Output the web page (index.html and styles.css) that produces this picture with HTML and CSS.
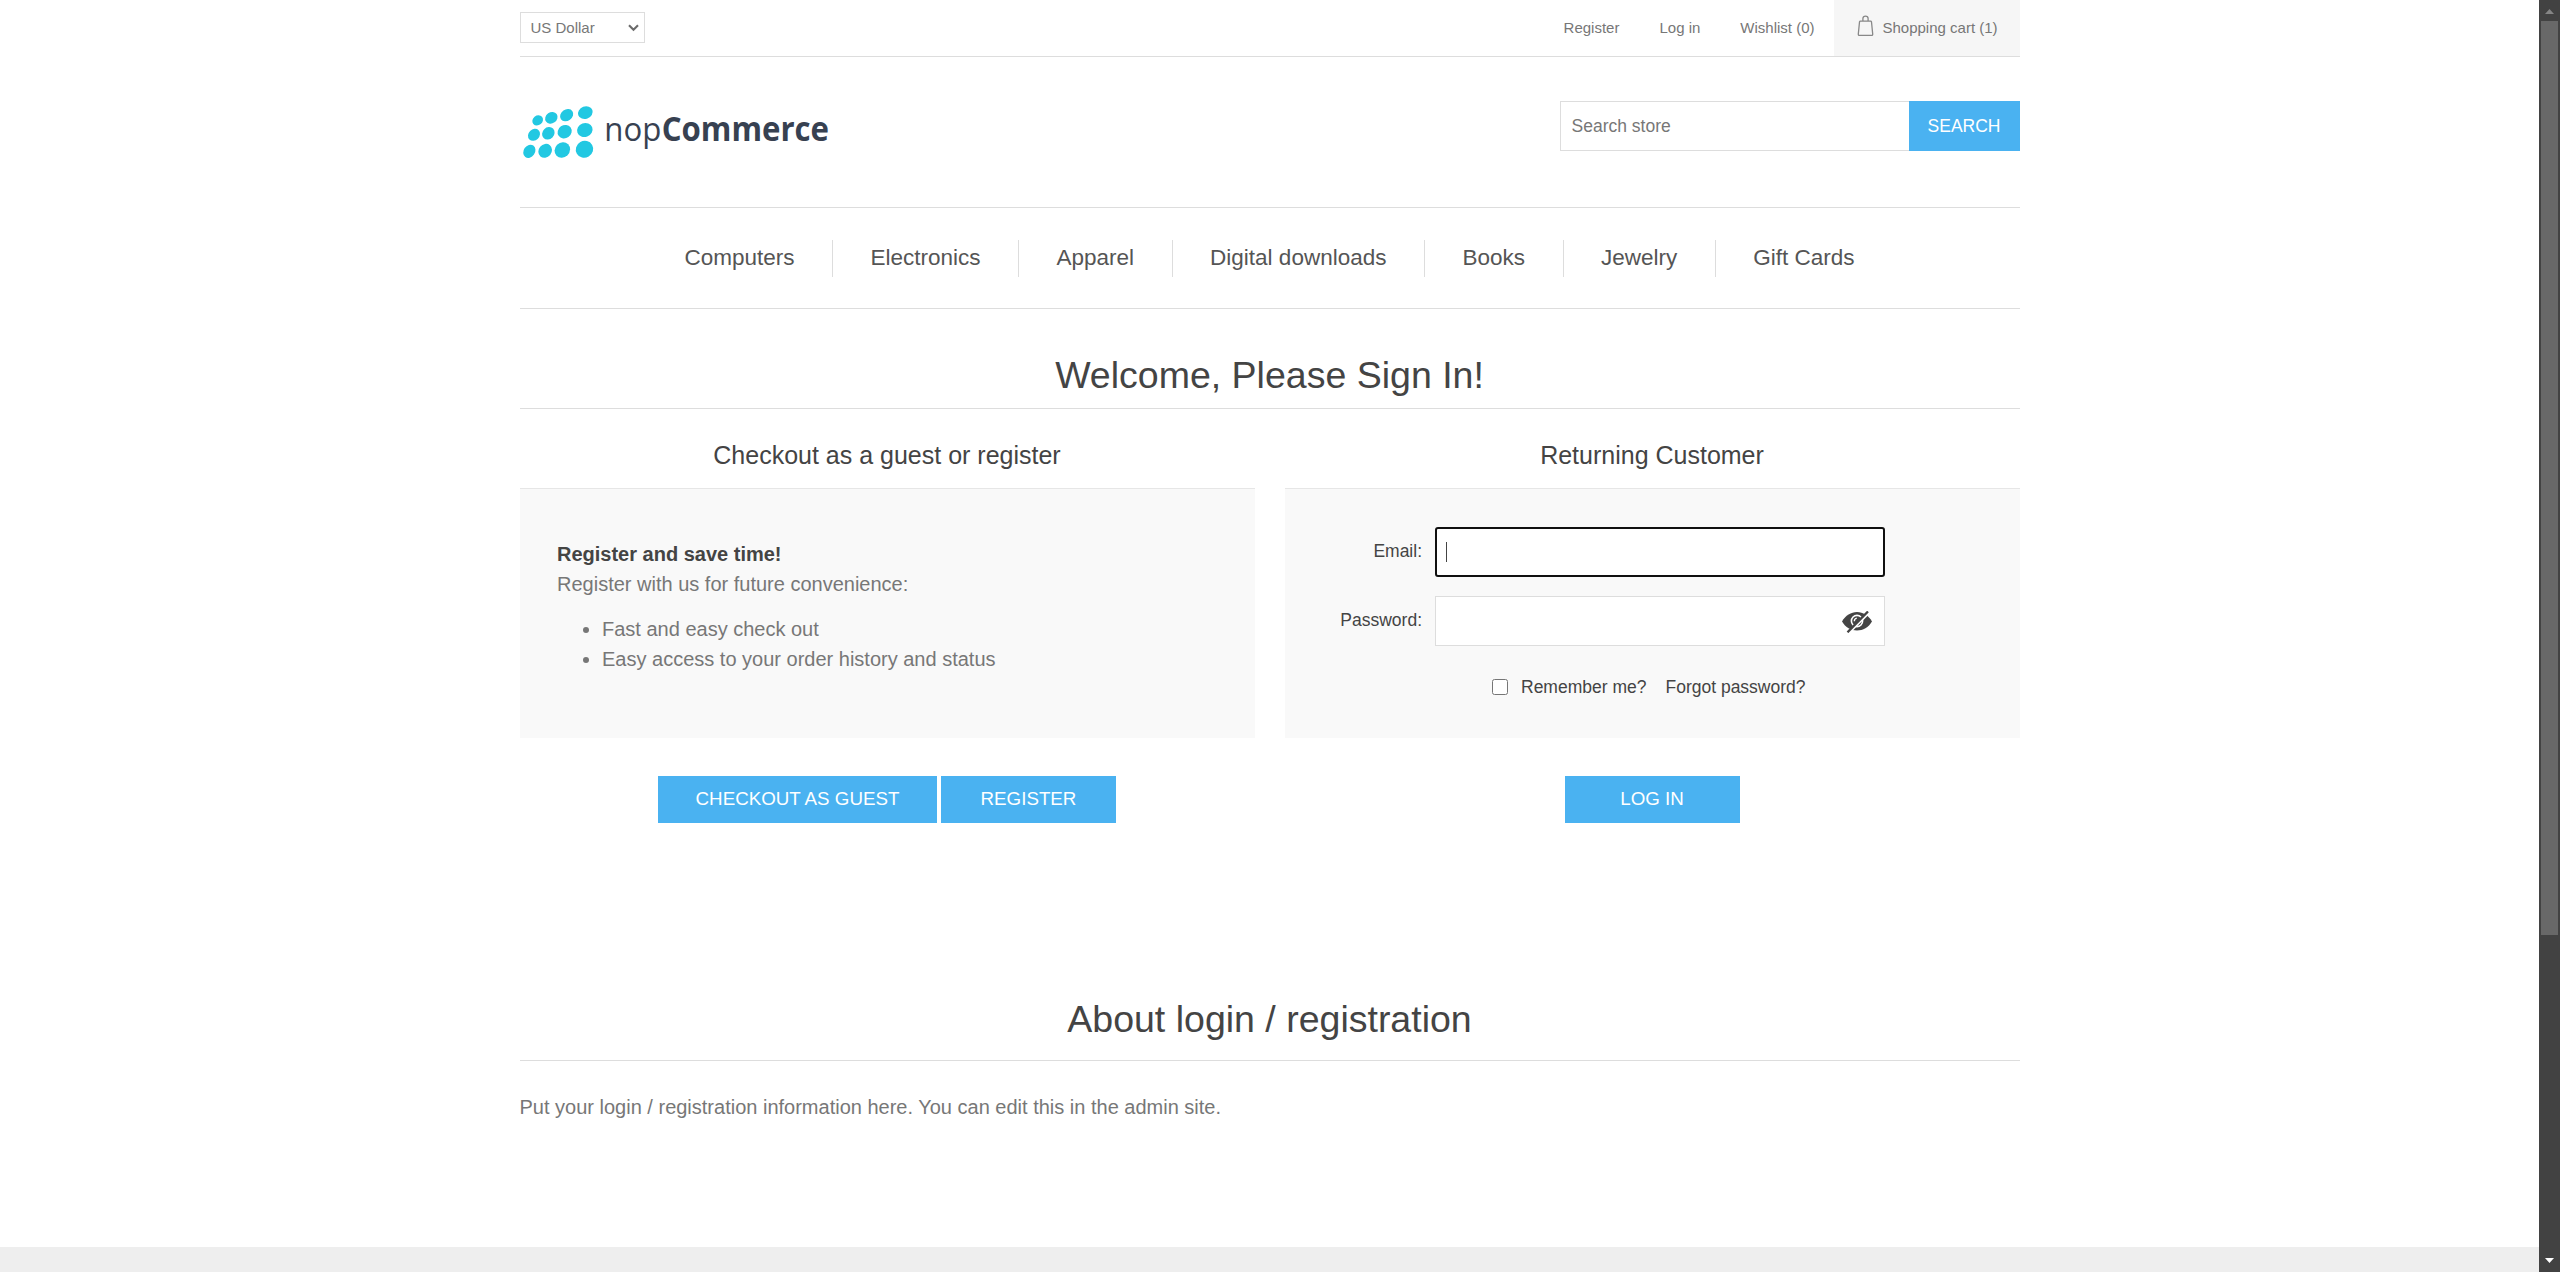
FILE: index.html
```html
<!DOCTYPE html>
<html lang="en">
<head>
<meta charset="utf-8">
<title>nopCommerce - Login</title>
<link rel="stylesheet" href="styles.css">
</head>
<body>
<div class="page">
  <div class="wrapper">
    <header>
      <div class="top-bar">
        <div class="currency">
          <select class="currency-select" aria-label="Currency"><option>US Dollar</option></select>
          <svg class="chevron" width="11" height="8" viewBox="0 0 11 8"><path d="M1 1.3 5.5 5.8 10 1.3" fill="none" stroke="#6b6b6b" stroke-width="2.1"/></svg>
        </div>
        <nav class="top-links">
          <a class="link-register">Register</a>
          <a class="link-login">Log in</a>
          <a class="link-wishlist">Wishlist (0)</a>
          <a class="cart">
            <svg class="bag" width="17" height="22" viewBox="0 0 17 22" fill="none" stroke="#888" stroke-width="1.3"><path d="M3.4 6.2h10.2c.5 0 .8.3.9.8l1.2 12c.1.9-.3 1.4-1.1 1.4H2.4c-.8 0-1.2-.5-1.1-1.4L2.5 7c.1-.5.4-.8.9-.8z"/><path d="M5.9 6V3.6C5.9 2 7 1.1 8.5 1.1s2.6.9 2.6 2.5V6"/></svg>
            <span>Shopping cart (1)</span>
          </a>
        </nav>
      </div>
      <div class="brand-bar">
        <svg class="logo" width="320" height="60" viewBox="60 300 960 180">
          <g fill="#22c8e2">
            <ellipse cx="113" cy="361" rx="17" ry="14.5" transform="rotate(-40 113 361)"/>
            <ellipse cx="154" cy="353.500" rx="19.500" ry="16.500" transform="rotate(-35 154 353.500)"/>
            <ellipse cx="200" cy="345.500" rx="21" ry="17" transform="rotate(-35 200 345.500)"/>
            <ellipse cx="256" cy="338" rx="22.500" ry="18.500" transform="rotate(-20 256 338)"/>
            <ellipse cx="102" cy="404.500" rx="19.500" ry="16.500" transform="rotate(-45 102 404.500)"/>
            <ellipse cx="145" cy="400" rx="20" ry="17.500" transform="rotate(-45 145 400)"/>
            <ellipse cx="194" cy="395" rx="22" ry="19.500" transform="rotate(-35 194 395)"/>
            <ellipse cx="254.500" cy="390" rx="23.500" ry="21" transform="rotate(-20 254.500 390)"/>
            <ellipse cx="88" cy="454" rx="21" ry="17" transform="rotate(-55 88 454)"/>
            <ellipse cx="135.500" cy="452.500" rx="22" ry="19.500" transform="rotate(-50 135.500 452.500)"/>
            <ellipse cx="187" cy="450" rx="24.500" ry="22" transform="rotate(-45 187 450)"/>
            <ellipse cx="253.500" cy="448" rx="26.500" ry="25" transform="rotate(-30 253.500 448)"/>
          </g>
          <text class="logo-light" x="313" y="422" textLength="171" lengthAdjust="spacingAndGlyphs">nop</text>
          <text class="logo-bold" x="485" y="422" textLength="502" lengthAdjust="spacingAndGlyphs">Commerce</text>
        </svg>
        <form class="search">
          <input class="search-input" type="text" placeholder="Search store">
          <button class="search-button" type="button">SEARCH</button>
        </form>
      </div>
    </header>
    <nav class="menu">
      <a>Computers</a><a>Electronics</a><a>Apparel</a><a>Digital downloads</a><a>Books</a><a>Jewelry</a><a>Gift Cards</a>
    </nav>
    <main>
      <h1 class="page-title">Welcome, Please Sign In!</h1>
      <div class="columns">
        <section class="column">
          <h2>Checkout as a guest or register</h2>
          <div class="panel panel-text">
            <p><strong>Register and save time!</strong><br>Register with us for future convenience:</p>
            <ul>
              <li>Fast and easy check out</li>
              <li>Easy access to your order history and status</li>
            </ul>
          </div>
          <div class="buttons">
            <button class="button button-guest" type="button">CHECKOUT AS GUEST</button>
            <button class="button" type="button">REGISTER</button>
          </div>
        </section>
        <section class="column">
          <h2>Returning Customer</h2>
          <div class="panel panel-form">
            <div class="field">
              <label for="email">Email:</label>
              <div class="control">
                <input id="email" class="text-input active" type="text">
                <span class="caret"></span>
              </div>
            </div>
            <div class="field">
              <label for="password">Password:</label>
              <div class="control">
                <input id="password" class="text-input" type="password">
                <svg class="eye" width="30" height="22" viewBox="0 0 30 22"><path d="M0 10.500C3.500 4.500 9 1 15 1S26.500 4.500 30 10.500c-3.500 6-9 9-15 9S3.500 16.500 0 10.500z" fill="#444"/><circle cx="15" cy="10" r="5.600" fill="none" stroke="#fff" stroke-width="1.600"/><path d="M12.300 10.300c0-1.800.9-2.900 2.500-3.200" fill="none" stroke="#fff" stroke-width="1.300"/><path d="M8 21 27.200 1.700" stroke="#fff" stroke-width="2"/><path d="M5.500 21.300 26 .5" stroke="#444" stroke-width="2.300"/></svg>
              </div>
            </div>
            <div class="remember">
              <span class="checkbox" role="checkbox" aria-checked="false"></span>
              <span class="remember-label">Remember me?</span>
              <a>Forgot password?</a>
            </div>
          </div>
          <div class="buttons">
            <button class="button" type="button">LOG IN</button>
          </div>
        </section>
      </div>
      <section class="about">
        <h1>About login / registration</h1>
        <p>Put your login / registration information here. You can edit this in the admin site.</p>
      </section>
    </main>
  </div>
  <footer></footer>
</div>
<div class="scrollbar">
  <svg width="9" height="5" viewBox="0 0 9 5"><path d="M4.500 0 9 5H0z" fill="#858585"/></svg>
  <div class="thumb"></div>
  <svg class="arrow-down" width="9" height="5" viewBox="0 0 9 5"><path d="M0 0h9L4.500 5z" fill="#fff"/></svg>
</div>
</body>
</html>
```
FILE: styles.css
```css
* { box-sizing: border-box; margin: 0; padding: 0; }

body {
  display: flex;
  height: 1272px;
  overflow: hidden;
  background: #fff;
  color: #777;
  font-family: "Liberation Sans", Arial, sans-serif;
  font-size: 17.5px;
}

input, select, button { font-family: inherit; border-radius: 0; }
h1, h2 { font-weight: normal; color: #444; text-align: center; }

.page { flex: 1; display: flex; flex-direction: column; }
.wrapper { width: 1500px; height: 1247px; margin: 0 auto; }
footer { flex: 1; background: #eee; }

.top-bar {
  display: flex;
  justify-content: space-between;
  height: 57px;
  border-bottom: 1px solid #ddd;
  font-size: 15px;
}
.currency { position: relative; padding-top: 12px; }
.currency-select {
  appearance: none;
  display: block;
  width: 125px;
  height: 31px;
  padding: 0 10px;
  border: 1px solid #ddd;
  background: #fff;
  color: #777;
  font-size: 15px;
}
.chevron { position: absolute; right: 6px; top: 24px; }
.top-links { display: flex; align-items: center; }
.top-links a { padding-bottom: 2px; }
.link-register { margin-right: 40px; }
.link-login { margin-right: 40px; }
.link-wishlist { margin-right: 19px; }
.top-links .cart {
  display: flex;
  align-items: center;
  gap: 9px;
  width: 186px;
  height: 56px;
  padding-left: 23px;
  background: #f6f6f6;
}
.bag { margin-bottom: 2px; }

.brand-bar {
  display: flex;
  justify-content: space-between;
  height: 151px;
  padding-top: 44px;
  border-bottom: 1px solid #ddd;
}
.logo { margin-top: -1px; overflow: visible; }
.logo-light, .logo-bold { font-family: "Open Sans", "Noto Sans", sans-serif; font-size: 101px; fill: #374151; }
.logo-bold { font-weight: 700; }
.search { display: flex; height: 50px; }
.search-input {
  width: 349px;
  padding: 0 11px;
  border: 1px solid #ddd;
  border-right: 0;
  font-size: 17.5px;
}
.search-input::placeholder { color: #777; }
.search-button {
  width: 111px;
  border: 0;
  background: #4ab2f1;
  color: #fff;
  font-size: 17.5px;
}

.menu {
  display: flex;
  justify-content: center;
  align-items: center;
  height: 101px;
  border-bottom: 1px solid #ddd;
}
.menu a {
  height: 37px;
  padding: 0 37.5px;
  border-right: 1px solid #ddd;
  color: #555;
  font-size: 22.5px;
  line-height: 35px;
}
.menu a:last-child { border-right: 0; }

.page-title {
  height: 100px;
  padding-top: 44px;
  border-bottom: 1px solid #ddd;
  font-size: 37.5px;
  line-height: 44px;
}
.columns { display: flex; justify-content: space-between; }
.column { width: 735px; }
.column h2 { height: 79px; padding-top: 31px; font-size: 25px; line-height: 30px; }
.panel { height: 250px; border-top: 1px solid #e6e6e6; background: #f9f9f9; }
.panel-text { padding: 50px 37.5px; font-size: 20px; line-height: 30px; }
.panel-text strong { color: #444; }
.panel-text ul { margin-top: 15px; padding-left: 45px; }

.panel-form { padding-top: 38px; color: #444; }
.field { display: flex; height: 50px; margin-bottom: 19px; }
.field label { width: 137.5px; margin-right: 12.5px; line-height: 48px; text-align: right; }
.control { position: relative; }
.text-input { width: 450px; height: 50px; padding: 0 10px; border: 1px solid #ddd; background: #fff; font-size: 17.5px; }
.text-input.active { border: 2px solid #101010; border-radius: 3px; }
.caret { position: absolute; left: 11px; top: 15px; width: 1px; height: 20px; background: #444; }
.eye { position: absolute; right: 13px; top: 15px; }
.remember { display: flex; align-items: center; height: 22px; margin-top: 30px; padding-left: 207.5px; }
.checkbox { width: 16px; height: 16px; border: 1px solid #767676; border-radius: 2.5px; background: #fff; }
.remember-label { margin: 0 19px 0 13px; }

.buttons { display: flex; justify-content: center; gap: 4px; margin-top: 38px; }
.button {
  width: 175px;
  height: 47px;
  padding-bottom: 2px;
  border: 0;
  background: #4ab2f1;
  color: #fff;
  font-size: 18.75px;
}
.button-guest { width: 279px; }

.about { margin-top: 169px; }
.about h1 { height: 69px; padding-top: 5px; border-bottom: 1px solid #ddd; font-size: 37.5px; line-height: 44px; }
.about p { margin-top: 31px; font-size: 20px; line-height: 30px; }

.scrollbar {
  display: flex;
  flex-direction: column;
  align-items: center;
  width: 21px;
  height: 1272px;
  padding: 9px 0 9px;
  background: #424242;
}
.thumb { width: 17px; height: 914px; margin-top: 7px; background: #686868; }
.arrow-down { margin-top: auto; }
```
